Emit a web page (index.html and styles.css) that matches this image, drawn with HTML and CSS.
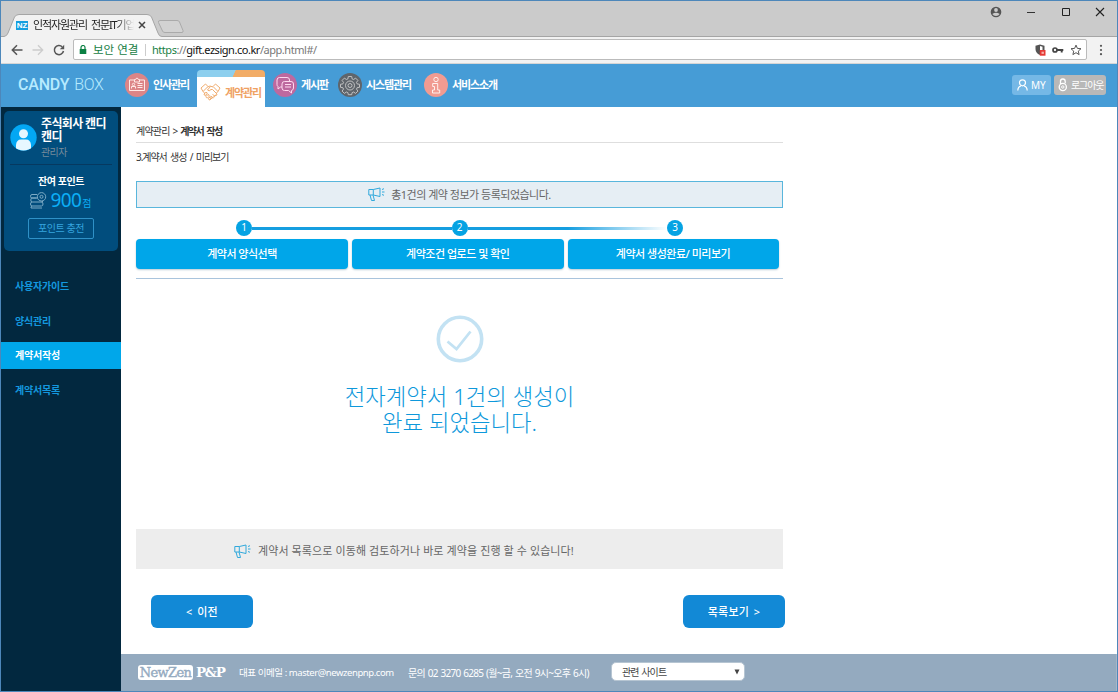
FILE: index.html
```
<!DOCTYPE html>
<html lang="ko">
<head>
<meta charset="utf-8">
<title>CANDY BOX</title>
<link rel="stylesheet" href="styles.css">
</head>
<body>
<div class="window">
  <div class="tabstrip">
    <svg class="tab-shape" width="190" height="28" viewBox="0 0 190 28"><path d="M3 27.500Q6 27 7 24L13.500 8Q15 5.500 18 5.500H146Q149 5.500 150.500 8L157 24Q158 27.500 161 27.500V28H3Z" fill="#f2f2f2"/><path d="M0 27.500H3Q6 27 7 24L13.500 8Q15 5.500 18 5.500H146Q149 5.500 150.500 8L157 24Q158 27.500 161 27.500H190" fill="none" stroke="#a5a5a5"/><path d="M159 11.500H176Q178 11.500 178.500 13L182 21.500Q182.500 23.500 181 23.500H164Q162 23.500 161.500 22L157.500 13.500Q157 11.500 159 11.500Z" fill="#d2d2d2" stroke="#aaa"/></svg>
    <div class="tab"><span class="favicon">NZ</span><span class="tab-title">인적자원관리 전문IT기업</span>
      <svg width="8" height="8" viewBox="0 0 8 8"><path d="M1 1l6 6M7 1L1 7" stroke="#444" stroke-width="1.500"/></svg></div>
    <div class="wincontrols">
      <svg width="12" height="12" viewBox="0 0 12 12"><circle cx="6" cy="6" r="5.300" fill="#555"/><circle cx="6" cy="4" r="1.900" fill="#cbcbcb"/><path d="M2.300 8Q6 5.500 9.700 8Q8.500 10 6 10T2.300 8Z" fill="#cbcbcb"/></svg>
      <svg width="10" height="10" viewBox="0 0 10 10"><path d="M1 5.500h8" stroke="#333"/></svg>
      <svg width="10" height="10" viewBox="0 0 10 10"><path d="M1.500 1.500h7v7h-7z" fill="none" stroke="#222"/></svg>
      <svg width="10" height="10" viewBox="0 0 10 10"><path d="M1 1l8 8M9 1L1 9" stroke="#222" stroke-width="1.100"/></svg>
    </div>
  </div>
  <div class="toolbar">
    <svg width="12" height="12" viewBox="0 0 12 12"><path d="M11.500 6H1.500M6 1.300L1.300 6L6 10.700" fill="none" stroke="#555" stroke-width="1.500"/></svg>
    <svg width="12" height="12" viewBox="0 0 12 12"><path d="M.5 6h10M6 1.300L10.700 6L6 10.700" fill="none" stroke="#ccc" stroke-width="1.300"/></svg>
    <svg width="12" height="12" viewBox="0 0 12 12"><path d="M10.500 7A4.600 4.600 0 1 1 9.200 2.700" fill="none" stroke="#555" stroke-width="1.500"/><path d="M11.200 .8V5.200H6.800Z" fill="#555"/></svg>
    <div class="address">
      <svg width="8" height="10" viewBox="0 0 8 10"><path d="M2 4V2.500a2 2 0 0 1 4 0V4" fill="none" stroke="#0b8043" stroke-width="1.200"/><path d="M.7 4h6.600v5H.7z" fill="#0b8043"/></svg>
      <span class="secure">보안 연결</span><span class="divider"></span><span class="url"><span class="scheme">https</span>://<b>gift.ezsign.co.kr</b>/app.html#/</span>
      <span class="address-icons">
        <svg width="12" height="12" viewBox="0 0 12 12"><path d="M6 .5l4.500 1.300V6Q10 9.500 6 11Q1.500 9 1.500 5V1.800Z" fill="#555"/><path d="M6 2v7L8.500 8V2.700Z" fill="#fff"/><path d="M5.800 6h5.700v5.700H5.800z" fill="#e53935"/><path d="M7.500 7.700h2.400v2.200H7.500z" fill="#f6b0a8"/></svg>
        <svg width="12" height="8" viewBox="0 0 12 8"><circle cx="3" cy="4" r="2" fill="none" stroke="#444" stroke-width="1.700"/><path d="M5 4h6.300M9.700 4v2.600" stroke="#444" stroke-width="1.900"/></svg>
        <svg width="12" height="12" viewBox="0 0 12 12"><path d="M6 1.100l1.400 3.300 3.600.3-2.700 2.400.8 3.500L6 8.700l-3.100 1.900.8-3.500L1 4.700l3.600-.3z" fill="none" stroke="#555"/></svg>
      </span>
    </div>
    <svg class="more" width="4" height="12" viewBox="0 0 4 12"><circle cx="2" cy="1.800" r="1.100" fill="#555"/><circle cx="2" cy="6" r="1.100" fill="#555"/><circle cx="2" cy="10.200" r="1.100" fill="#555"/></svg>
  </div>

  <header class="header">
    <div class="logo"><b>CANDY</b><span>BOX</span></div>
    <nav class="nav">
      <a class="nav-item hr"><svg width="24" height="24" viewBox="0 0 24 24"><circle cx="12" cy="12" r="12" fill="#dc8587"/><g fill="none" stroke="#ffe9e6"><path d="M9.500 7H4.500v10.500h15V7h-5M9.500 9V6.500h1.200a1.300 1.300 0 0 1 2.600 0h1.200V9z"/><path d="M6.500 15.500v-2h4v2M12.500 10.500h5M12.500 12.500h5M12.500 14.500h5"/><circle cx="8.500" cy="11.500" r="1.200"/></g></svg><span>인사관리</span></a>
      <a class="nav-item current"><svg width="21" height="19" viewBox="0 0 21 19"><g fill="none" stroke="#f0ad70" stroke-width="1" stroke-linejoin="round"><path d="M1 5l4.500-4L8 3.500 3 8.500zM20 5l-4.500-4L13 3.500 18 8.500zM7.500 4L10 3l3 1M3.500 8.500L5 11.500M17.500 8.500L16 11.500M10.500 3.500L7.500 7q1.500 2 3.500-.5h1.500L17 11q0 2-2 1.500 0 2-2 1.500-.5 2-2.500 1.500L9 14"/><path d="M4 11l2-1.700q1.500 0 1.200 1.700l-1.500 1.500Q4 12.500 4 11zM6 13.500l2-2q1.500 0 1.200 1.700L7.500 15Q6 15 6 13.500zM8.500 15.500l1.500-1.700q1.500 0 1.200 1.700L10 17Q8.500 17 8.500 15.500zM12.500 11.500l2.500 1.500M10.800 13l2.500 2"/></g></svg><span>계약관리</span></a>
      <a class="nav-item board"><svg width="24" height="24" viewBox="0 0 24 24"><circle cx="12" cy="12" r="12" fill="#bd699f"/><g fill="none" stroke="#ffd9ef"><path d="M9 14H7.500L5 16v-2.500Q4 13 4 11.500V7Q4 4.500 6.500 4.500H14Q16.500 4.500 16.500 7v1"/><path d="M11.500 8.500H18Q20.500 8.500 20.500 11v4Q20.500 17 18.500 17.500V20L15.500 17.500h-4Q9 17.500 9 15v-4Q9 8.500 11.500 8.500zM12 11.500h6M12 14h6"/></g></svg><span>게시판</span></a>
      <a class="nav-item system"><svg width="24" height="24" viewBox="0 0 24 24"><circle cx="12" cy="12" r="12" fill="#5f656b"/><g fill="none" stroke="#cacaca" stroke-width=".9"><path d="M10.300 3.500h3.400l.4 2.400 1.500.6 2-1.400 2.300 2.300-1.400 2 .6 1.500 2.400.4v3l-2.400.4-.6 1.400 1.400 2-2.300 2.300-2-1.400-1.500.6-.4 2.100h-3.400l-.4-2.100-1.500-.6-2 1.400-2.300-2.300 1.400-2-.6-1.400-2.400-.4v-3l2.400-.4.6-1.500-1.400-2 2.300-2.300 2 1.400 1.500-.6z"/><circle cx="12" cy="12.500" r="4.500"/><circle cx="12" cy="12.500" r="2"/></g></svg><span>시스템관리</span></a>
      <a class="nav-item intro"><svg width="24" height="24" viewBox="0 0 24 24"><circle cx="12" cy="12" r="12" fill="#f19b91"/><g fill="none" stroke="#fff1ed"><circle cx="12" cy="6.500" r="2.200"/><path d="M8.700 10.500h5V17h2v3H8.500v-3h2v-3.500H8.700z"/></g></svg><span>서비스소개</span></a>
    </nav>
    <div class="account">
      <a class="my"><svg width="11" height="12" viewBox="0 0 11 12"><circle cx="5.500" cy="3.800" r="3" fill="none" stroke="#fff" stroke-width="1.200"/><path d="M.8 11.500Q1 7.500 4 6.800M10.200 11.500Q10 7.500 7 6.800" fill="none" stroke="#fff" stroke-width="1.200"/></svg>MY</a>
      <a class="logout"><svg width="10" height="14" viewBox="0 0 10 14"><path d="M2.500 6V3.500a2.200 2.200 0 0 1 4.700-.3v2" fill="none" stroke="#fff" stroke-width="1.300"/><circle cx="4.800" cy="9" r="3.600" fill="none" stroke="#fff" stroke-width="1.300"/><circle cx="4.800" cy="9" r="1.200" fill="none" stroke="#fff"/></svg><span>로그아웃</span></a>
    </div>
  </header>

  <div class="body">
    <aside class="sidebar">
      <section class="profile">
        <div class="person">
          <svg width="27" height="27" viewBox="0 0 27 27"><defs><clipPath id="face"><circle cx="13.500" cy="13.500" r="13"/></clipPath></defs><circle cx="13.500" cy="13.500" r="13.200" fill="#03a7f4"/><g clip-path="url(#face)" fill="#e7f7ff"><circle cx="13.500" cy="9.700" r="4.500"/><path d="M6 27V21Q6.500 15.500 11 15.500h5Q20.500 15.500 21 21v6z"/></g></svg>
          <div><div class="name">주식회사 캔디<br>캔디</div><div class="role">관리자</div></div>
        </div>
        <div class="points">
          <div class="points-label">잔여 포인트</div>
          <div class="points-value"><svg width="17" height="17" viewBox="0 0 17 17"><g fill="none" stroke="#7dabc5"><path d="M7 2.500H2q-1.500 0-1.500 1.800T2 6h5.500M6.500 6H2Q.8 6 .8 8T2 10h10.500V9M2 10q-1.500 0-1.500 2T2 14h9.500q1.500 0 1.500-2t-1.500-2M2 14q-1.200.5-1 2h11"/><circle cx="11.500" cy="4.800" r="4.200"/><circle cx="11.500" cy="4.800" r="1.500"/></g></svg><strong>900</strong><span>점</span></div>
          <a class="charge">포인트 충전</a>
        </div>
      </section>
      <ul class="menu"><li>사용자가이드</li><li>양식관리</li><li class="active">계약서작성</li><li>계약서목록</li></ul>
    </aside>

    <div class="page">
      <main class="main">
        <div class="breadcrumb">계약관리 &gt; <b>계약서 작성</b></div>
        <div class="subtitle">3.계약서 생성 / 미리보기</div>
        <div class="alert"><svg width="17" height="15" viewBox="0 0 17 15"><path d="M.8 2.500h4.500v5.500H.8zM5.300 2.500L12 1v8.500L5.300 8M2 8l1.500 5.500h3L5 8M14 2.500l2-.8M14 5h2.500M14 7.500l2 .8" fill="none" stroke="#31a9dc"/></svg><span>총1건의 계약 정보가 등록되었습니다.</span></div>
        <div class="progress"><i>1</i><hr><i>2</i><hr class="fade"><i>3</i></div>
        <div class="steps"><a>계약서 양식선택</a><a>계약조건 업로드 및 확인</a><a>계약서 생성완료/ 미리보기</a></div>
        <div class="result">
          <svg width="48" height="48" viewBox="0 0 48 48"><circle cx="24" cy="24" r="21.700" fill="none" stroke="#c3e2f3" stroke-width="3.600"/><path d="M11.500 26.500l9 7.500L34.500 16.500" fill="none" stroke="#c3e2f3" stroke-width="2.800"/></svg>
          <p>전자계약서 1건의 생성이<br>완료 되었습니다.</p>
        </div>
        <div class="notice"><svg width="17" height="15" viewBox="0 0 17 15"><path d="M.8 2.500h4.500v5.500H.8zM5.300 2.500L12 1v8.500L5.300 8M2 8l1.500 5.500h3L5 8M14 2.500l2-.8M14 5h2.500M14 7.500l2 .8" fill="none" stroke="#31a9dc"/></svg><span>계약서 목록으로 이동해 검토하거나 바로 계약을 진행 할 수 있습니다!</span></div>
        <div class="actions"><a>&lt; 이전</a><a>목록보기 &gt;</a></div>
      </main>
      <footer class="footer">
        <div class="company"><span>NewZen</span><b>P&amp;P</b></div>
        <div class="email">대표 이메일 : master@newzenpnp.com</div>
        <div class="phone">문의 02 3270 6285 (월~금, 오전 9시~오후 6시)</div>
        <div class="sites"><span>관련 사이트</span><svg width="6" height="6" viewBox="0 0 6 6"><path d="M.5 .5h5L3 5.500z" fill="#444"/></svg></div>
      </footer>
    </div>
  </div>
</div>
</body>
</html>
```
FILE: styles.css
```
* { box-sizing: border-box; }
body { margin: 0; font: 11px/14px "Noto Sans", "Noto Sans CJK KR", sans-serif; color: #333; }
svg { display: block; flex: none; }
.window { width: 1118px; height: 692px; border: 1px solid #4d87ba; overflow: hidden; display: flex; flex-direction: column; background: #fff; white-space: nowrap; }
.tabstrip { position: relative; height: 36px; flex: none; background: #cbcbcb; border-bottom: 1px solid #a5a5a5; display: flex; justify-content: space-between; }
.tab-shape { position: absolute; left: 0; top: 8px; }
.tab { position: relative; display: flex; align-items: center; width: 146px; height: 20px; margin-top: 14px; padding-left: 15px; }
.favicon { width: 12px; height: 9px; margin-right: 5px; background: #159fe0; color: #fff; font: bold 8px/9px "Liberation Sans", sans-serif; text-align: center; }
.tab-title { width: 101px; margin-right: 4px; overflow: hidden; letter-spacing: -1.100px; word-spacing: 2px; color: #222; mask-image: linear-gradient(90deg, #000 83%, transparent); }
.wincontrols { display: flex; align-items: center; gap: 24.500px; height: 21px; padding-right: 12px; }
.toolbar { height: 27px; flex: none; display: flex; align-items: center; gap: 9px; padding: 0 0 1px 10px; background: #f2f2f2; border-bottom: 1px solid #d5d5d5; }
.address { width: 1014px; height: 21px; margin-left: -1px; display: flex; align-items: center; background: #fff; border: 1px solid #bbb; border-radius: 2px; padding-left: 5px; }
.secure { margin-left: 6px; width: 47px; color: #188044; font-size: 11.500px; }
.divider { width: 1px; height: 12px; background: #ccc; margin: 0 6px 0 5px; }
.url { color: #777; font-size: 11px; letter-spacing: -.46px; }
.url .scheme { color: #188044; }
.url b { font-weight: 400; color: #111; }
.address-icons { display: flex; align-items: center; gap: 6px; margin: 0 4px 0 auto; }
.more { margin-left: 3px; }
.header { height: 43px; flex: none; background: #469cd6; display: flex; color: #fff; }
.logo { display: flex; align-items: center; gap: 5px; width: 124px; padding: 0 0 1px 17px; color: #b7ebff; font: 16px/20px Roboto, sans-serif; }
.logo b { font-weight: 500; letter-spacing: -.2px; }
.logo span { font-weight: 300; letter-spacing: -.4px; }
.nav { display: flex; }
.nav-item { display: flex; align-items: center; gap: 4px; padding-bottom: 1px; font-size: 11px; font-weight: 700; letter-spacing: -1.100px; }
.hr { width: 72px; }
.current { width: 68px; height: 37px; margin-top: 6px; padding: 8px 3px 0; color: #efa263; background: linear-gradient(115deg, #8dcfee 54%, #f2ac66 55%) top / 100% 7px no-repeat, #fff; border-radius: 4px 4px 0 0; }
.board { margin-left: 8px; width: 65px; }
.system { width: 86px; }
.intro { width: 80px; }
.account { display: flex; align-items: center; gap: 3px; margin: 0 11px 1px auto; }
.account a { display: flex; align-items: center; height: 20px; border-radius: 3px; }
.my { width: 39px; padding-left: 5px; gap: 3px; background: #75b8e6; font-size: 10px; }
.logout { width: 52px; padding-left: 4px; gap: 3px; background: #b8b8b8; font-size: 10px; letter-spacing: -1.100px; }
.body { flex: 1; display: flex; min-height: 0; }
.sidebar { width: 120px; flex: none; background: #02283f; padding: 4px 3px 0; }
.profile { width: 114px; height: 140px; background: #014d7d; border-radius: 5px; padding: 6px; }
.person { display: flex; gap: 4px; height: 48px; border-bottom: 1px solid #063960; color: #fff; align-items: flex-start; }
.person svg { margin-top: 7px; }
.name { font-size: 12px; font-weight: 700; line-height: 13px; letter-spacing: -.65px; }
.role { margin-top: 3px; font-size: 10px; line-height: 13px; letter-spacing: -.6px; color: #768b9b; }
.points { display: flex; flex-direction: column; align-items: center; }
.points-label { margin-top: 9px; color: #fff; font-size: 10px; font-weight: 700; letter-spacing: -.4px; }
.points-value { display: flex; align-items: center; height: 24px; color: #0caef5; }
.points-value strong { margin: 0 1px 0 3px; font: 19px/24px "Noto Sans", sans-serif; letter-spacing: -.6px; }
.points-value span { font-size: 10px; margin-top: 6px; }
.charge { width: 66px; height: 21px; margin-top: 6px; border: 1px solid #2f91c7; border-radius: 2px; color: #35a5df; font-size: 10px; line-height: 19px; letter-spacing: -.4px; text-align: center; }
.menu { list-style: none; margin: 22px -3px 0; padding: 0; display: flex; flex-direction: column; gap: 7.600px; }
.menu li { height: 27px; padding-left: 14px; color: #1498df; font-size: 10px; font-weight: 700; line-height: 27px; letter-spacing: -.2px; }
.menu .active { background: #00a7ea; color: #fff; }
.page { flex: 1; display: flex; flex-direction: column; }
.main { width: 648px; height: 547px; margin-left: 15px; padding-top: 17px; }
.breadcrumb { width: 647px; height: 19px; border-bottom: 1px solid #dedede; font-size: 10px; letter-spacing: -.8px; word-spacing: 1px; }
.breadcrumb b { letter-spacing: -1.500px; word-spacing: 2px; }
.subtitle { margin: 7px 0 17px; font-size: 10px; letter-spacing: -1.050px; word-spacing: 1.800px; }
.alert { width: 647px; height: 27px; display: flex; align-items: center; justify-content: center; gap: 6px; border: 1px solid #59b6dc; background: #e6eef4; color: #666; letter-spacing: -.5px; }
.progress { width: 447px; height: 16px; margin: 12px 0 3px 100px; display: flex; align-items: center; }
.progress i { width: 16px; height: 16px; flex: none; border-radius: 50%; background: #05a3e3; color: #fff; font-style: normal; font-size: 10px; line-height: 15px; text-align: center; }
.progress hr { flex: 1; height: 3px; margin: 0; border: 0; background: #159ee0; }
.progress .fade { background: linear-gradient(90deg, #159ee0 50%, #fff); }
.steps { display: grid; grid-template-columns: 212px 211.500px 211px; gap: 4px; height: 30px; }
.steps a { border-radius: 4px; background: #00a6e9; box-shadow: 0 1px 2px #b8cbd5; color: #fff; text-align: center; line-height: 30px; font-weight: 500; letter-spacing: -.5px; }
.result { width: 647px; height: 251px; margin-top: 9px; padding-top: 36px; border-top: 1px solid #a9c4dd; display: flex; flex-direction: column; align-items: center; color: #0e98db; }
.result p { margin: 21px 0 0; font-size: 22.300px; font-weight: 300; line-height: 26px; text-align: center; }
.notice { width: 647px; height: 40px; padding-left: 98px; display: flex; align-items: center; gap: 7px; background: #ededed; color: #666; letter-spacing: .1px; }
.notice svg, .notice span { margin-top: 4px; }
.actions { width: 634px; margin: 26px 0 0 15px; display: flex; justify-content: space-between; }
.actions a { width: 102px; height: 33px; border-radius: 6px; background: #1289d6; color: #fff; font-weight: 500; line-height: 33px; letter-spacing: .25px; word-spacing: 1.500px; text-align: center; }
.footer { flex: 1; display: flex; align-items: center; padding: 0 0 1px 17px; background: #94aabf; color: #fff; font-size: 10px; border-right: 1px solid #a8b7c6; }
.company { display: flex; align-items: center; gap: 3px; width: 101px; font-family: "DejaVu Serif", serif; }
.company span { width: 55px; height: 15px; border-radius: 3px; background: #fff; color: #94aabf; font-size: 13px; line-height: 15px; letter-spacing: -.6px; text-align: center; -webkit-text-stroke: .4px; }
.company b { font-size: 13.500px; letter-spacing: -1.300px; }
.email { width: 169px; margin-top: 2px; font-size: 9.500px; letter-spacing: -.43px; }
.phone { width: 203px; margin-top: 2px; letter-spacing: -.7px; word-spacing: .8px; }
.sites { width: 134px; height: 19px; margin-bottom: 1px; padding: 0 4px 0 10px; display: flex; align-items: center; justify-content: space-between; border: 1px solid #b6c5d2; border-radius: 5px; background: #fff; color: #444; letter-spacing: -.9px; word-spacing: 1px; }
```
